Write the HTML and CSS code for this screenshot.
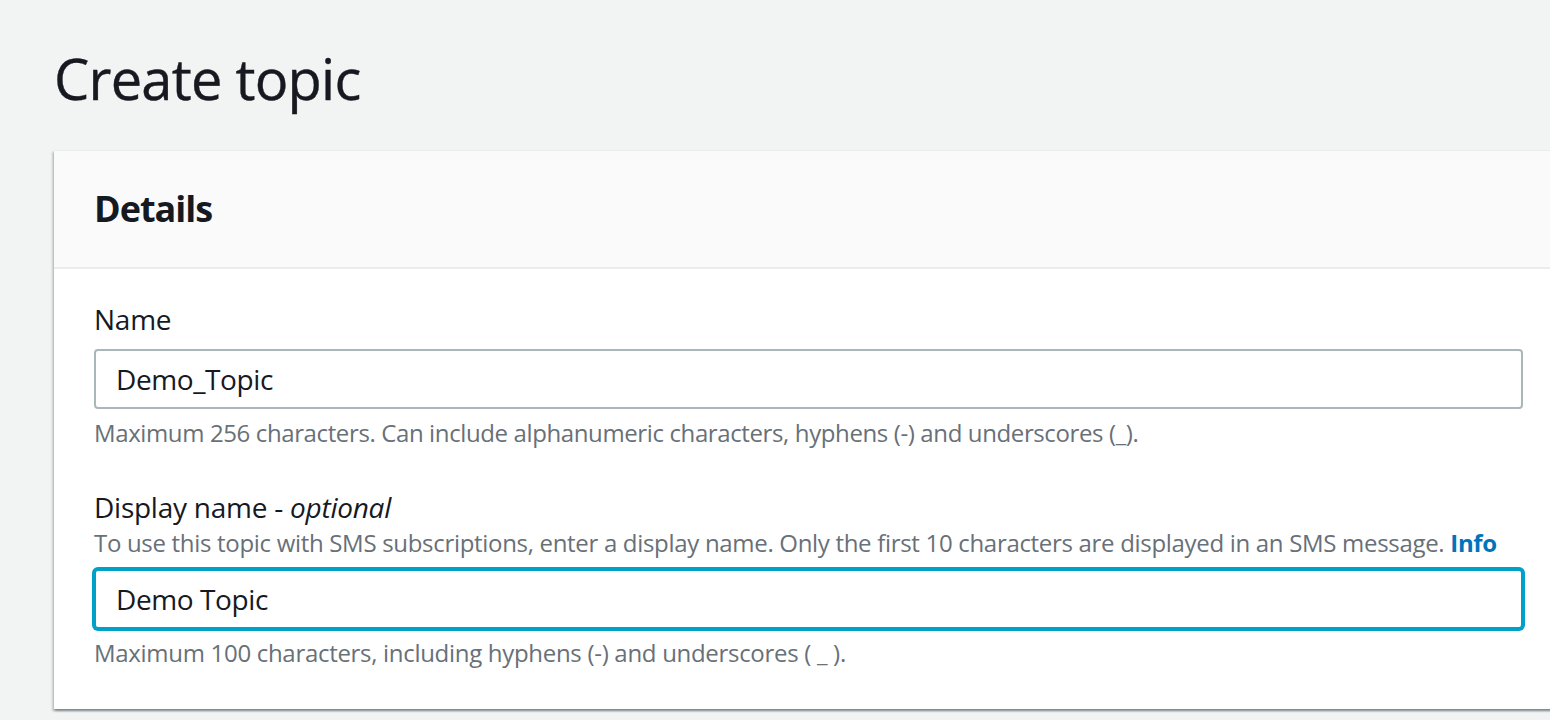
FILE: index.html
```html
<!DOCTYPE html>
<html lang="en">
<head>
<meta charset="utf-8">
<title>Create topic</title>
<link rel="stylesheet" href="styles.css">
</head>
<body>
<main class="page">
  <h1 class="page-title">Create topic</h1>
  <section class="card">
    <header class="card-header">
      <h2 class="card-title">Details</h2>
    </header>
    <div class="card-body">
      <div class="field">
        <label class="field-label" for="name">Name</label>
        <input class="field-input" id="name" type="text" value="Demo_Topic">
        <p class="field-hint">Maximum 256 characters. Can include alphanumeric characters, hyphens (-) and underscores (_).</p>
      </div>
      <div class="field">
        <label class="field-label" for="display">Display name - <i>optional</i></label>
        <p class="field-desc">To use this topic with SMS subscriptions, enter a display name. Only the first 10 characters are displayed in an SMS message. <a class="info-link" href="#">Info</a></p>
        <input class="field-input is-focused" id="display" type="text" value="Demo Topic">
        <p class="field-hint field-hint-wide">Maximum 100 characters, including hyphens (-) and underscores ( _ ).</p>
      </div>
    </div>
  </section>
</main>
</body>
</html>
```

FILE: styles.css
```css
html, body {
  margin: 0;
  padding: 0;
}

body {
  background: #f2f3f3;
  color: #16191f;
  font-family: "Open Sans", "Noto Sans", "Liberation Sans", sans-serif;
  overflow: hidden;
  width: 1550px;
  height: 720px;
}

.page {
  padding: 42px 0 0 54px;
}

.page-title {
  margin: 0 0 36px 0;
  font-size: 56px;
  line-height: 72px;
  font-weight: 400;
  letter-spacing: -0.75px;
  color: #16191f;
  -webkit-text-stroke: 0.4px #16191f;
}

.card {
  width: 1509px;
  background: #ffffff;
  box-shadow: 0 2px 2px 0 rgba(0, 28, 36, 0.3), 2px 2px 2px 0 rgba(0, 28, 36, 0.15), -2px 2px 2px 0 rgba(0, 28, 36, 0.15);
  border-top: 1px solid #eaeded;
}

.card-header {
  background: #fafafa;
  border-bottom: 2px solid #eaeded;
  padding: 36px 40px;
}

.card-title {
  margin: 0;
  font-size: 36px;
  line-height: 44px;
  font-weight: 700;
  letter-spacing: -1px;
}

.card-body {
  padding: 30px 40px 40px;
  display: flex;
  flex-direction: column;
  gap: 38px;
}

.field {
  display: flex;
  flex-direction: column;
}

.field-label {
  font-size: 28px;
  line-height: 40px;
  letter-spacing: -0.25px;
  color: #16191f;
}

.field-label i {
  font-style: italic;
}

.field-desc {
  margin: 0;
  font-size: 24px;
  line-height: 32px;
  letter-spacing: -0.31px;
  color: #687078;
}

.info-link {
  color: #0073bb;
  font-weight: 700;
  text-decoration: none;
}

.field-input {
  margin-top: 10px;
  box-sizing: border-box;
  width: 100%;
  height: 60px;
  border: 2px solid #aab7b8;
  border-radius: 4px;
  padding: 0 20px;
  font-family: inherit;
  font-size: 28px;
  letter-spacing: -0.4px;
  color: #16191f;
  background: #ffffff;
  outline: none;
}

.field-input.is-focused {
  border-color: #00a1c9;
  box-shadow: 0 0 0 2px #00a1c9;
}

.field-hint {
  margin: 8px 0 0;
  font-size: 24px;
  line-height: 32px;
  letter-spacing: -0.38px;
  color: #687078;
}

.field-hint-wide {
  letter-spacing: -0.3px;
}
```
